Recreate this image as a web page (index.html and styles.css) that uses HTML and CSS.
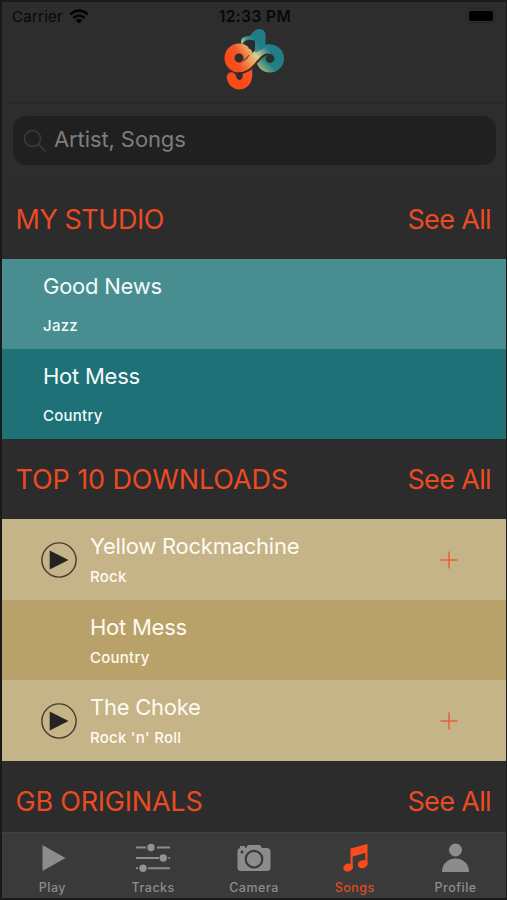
FILE: index.html
```html
<!DOCTYPE html>
<html lang="en">
<head>
<meta charset="utf-8">
<title>Songs</title>
<link rel="stylesheet" href="styles.css">
</head>
<body>
<div class="phone">
  <header class="top">
    <div class="status">
      <div class="carrier"><span>Carrier</span>
        <svg width="20" height="15" viewBox="0 0 20 15"><g fill="none" stroke="#030303" stroke-width="2.5"><path d="M1.2 5.5Q10-2.2 18.8 5.5"/><path d="M4.5 9Q10 4.1 15.5 9"/></g><path d="M6.8 11.2Q10 8.5 13.2 11.2L10 14.5z" fill="#030303"/></svg>
      </div>
      <div class="time">12:33 PM</div>
      <svg class="battery" width="32" height="16" viewBox="0 0 32 16"><rect x=".7" y=".7" width="28" height="14" rx="4" fill="none" stroke="#262626"/><rect x="3" y="3" width="24" height="10" rx="2" fill="#000"/><path d="M30 5.5q2 2.2 0 4.5z" fill="#222"/></svg>
    </div>
    <svg class="logo" width="62" height="64" viewBox="0 0 62 64">
      <defs>
        <linearGradient id="warm" gradientUnits="userSpaceOnUse" x1="8" y1="36" x2="34" y2="20"><stop offset="0" stop-color="#f94b18"/><stop offset=".38" stop-color="#f4582b"/><stop offset=".7" stop-color="#e9a35f"/><stop offset="1" stop-color="#e5cf95"/></linearGradient>
        <linearGradient id="tail" gradientUnits="userSpaceOnUse" x1="20" y1="50" x2="29" y2="36"><stop offset="0" stop-color="#f94b18"/><stop offset=".6" stop-color="#ef5a24"/><stop offset="1" stop-color="#6d3a20"/></linearGradient>
        <linearGradient id="band" gradientUnits="userSpaceOnUse" x1="17" y1="40" x2="41" y2="17"><stop offset="0" stop-color="#f65222"/><stop offset=".35" stop-color="#ed9d58"/><stop offset=".62" stop-color="#dccb92"/><stop offset="1" stop-color="#22818b"/></linearGradient>
        <linearGradient id="cool" gradientUnits="userSpaceOnUse" x1="34" y1="42" x2="46" y2="30"><stop offset="0" stop-color="#dcd592"/><stop offset=".4" stop-color="#6d9c7c"/><stop offset=".8" stop-color="#217e87"/></linearGradient>
        <linearGradient id="flag" gradientUnits="userSpaceOnUse" x1="17" y1="16" x2="29" y2="7"><stop offset="0" stop-color="#d4d5ab"/><stop offset=".6" stop-color="#378c91"/><stop offset="1" stop-color="#207c85"/></linearGradient>
      </defs>
      <path d="M23.500 38V46C23.500 58 9 59 7.500 48" fill="none" stroke="url(#tail)" stroke-width="9.500" stroke-linecap="round"/>
      <circle cx="15" cy="29" r="9.500" fill="none" stroke="url(#warm)" stroke-width="10"/>
      <circle cx="46" cy="29.500" r="9.200" fill="none" stroke="url(#cool)" stroke-width="9.600"/>
      <path d="M17 39C25 39 29 31 34 25Q39 19.500 46 20.300" fill="none" stroke="url(#band)" stroke-width="9.500"/>
      <path d="M18 16C15 9 20 7 26 7Q30 0 35.500 0C39.500 0 41.500 3 41.500 7V18L31 24V12C26 10 20 10 18 16z" fill="url(#flag)"/>
      <path d="M14 44.500C26 44 29 37 35 31Q39 26 44 25" fill="none" stroke="#352820" stroke-width="1.800"/>
      <path d="M17 32Q22 31 25 26" fill="none" stroke="#78462f" stroke-width="1.100"/>
      <path d="M24.500 19.500V16.500Q28 15 29 12H31V22Q28 19.500 24.500 19.500z" fill="#292c2c"/>
    </svg>
  </header>
  <div class="search-wrap"><div class="search">
    <svg width="24" height="24" viewBox="0 0 24 24"><g fill="none" stroke="#383838" stroke-width="1.8"><circle cx="9.5" cy="9.5" r="8"/><path d="M15.5 15.5L22.5 22.5"/></g></svg>
    <span>Artist, Songs</span>
  </div></div>

  <section class="head"><span class="studio">MY STUDIO</span><a>See All</a></section>
  <div class="tall light-teal"><b>Good News</b><small>Jazz</small></div>
  <div class="tall teal"><b>Hot Mess</b><small>Country</small></div>

  <section class="head"><span class="top10">TOP 10 DOWNLOADS</span><a>See All</a></section>
  <div class="row sand">
    <svg class="play" width="36" height="36" viewBox="0 0 36 36"><circle cx="18" cy="18" r="17.1" fill="none" stroke="#463c2d" stroke-width="1.4"/><path d="M8.7 8.5V27.5L27.5 18z" fill="#262422"/></svg>
    <div class="song"><b>Yellow Rockmachine</b><small>Rock</small></div>
    <svg class="plus" width="18" height="18" viewBox="0 0 18 18"><path d="M.5 9H17.5M9 .5V17.5" stroke="#e5623b" stroke-width="1.5"/></svg>
  </div>
  <div class="row gold">
    <div class="song solo"><b>Hot Mess</b><small>Country</small></div>
  </div>
  <div class="row sand">
    <svg class="play" width="36" height="36" viewBox="0 0 36 36"><circle cx="18" cy="18" r="17.1" fill="none" stroke="#463c2d" stroke-width="1.4"/><path d="M8.7 8.5V27.5L27.5 18z" fill="#262422"/></svg>
    <div class="song"><b>The Choke</b><small>Rock 'n' Roll</small></div>
    <svg class="plus" width="18" height="18" viewBox="0 0 18 18"><path d="M.5 9H17.5M9 .5V17.5" stroke="#e5623b" stroke-width="1.5"/></svg>
  </div>
  <section class="head last"><span class="gb">GB ORIGINALS</span><a>See All</a></section>

  <nav class="tabs">
    <div class="tab"><svg width="36" height="32" viewBox="0 0 36 32"><path d="M8.5 3V29L31.5 16z" fill="#8c8c8c"/></svg><span>Play</span></div>
    <div class="tab"><svg width="36" height="32" viewBox="0 0 36 32"><path d="M1 5.5H11M22 5.5H35M1 16H24M33.5 16H35M1 26.3H3M13 26.3H35" stroke="#8c8c8c" stroke-width="2"/><g fill="#929292"><circle cx="16" cy="5.5" r="3.7"/><circle cx="28.3" cy="16" r="3.7"/><circle cx="8" cy="26.3" r="3.7"/></g></svg><span>Tracks</span></div>
    <div class="tab"><svg width="36" height="32" viewBox="0 0 36 32"><path d="M5 6h5l2-3h12l2 3h5q3.5 0 3.5 3.5v16q0 3.5-3.5 3.5H5q-3.5 0-3.5-3.500v-16Q1.500 6 5 6z" fill="#8c8c8c"/><path d="M4 6V4H9V6z" fill="#8c8c8c"/><circle cx="18" cy="17.200" r="8.300" fill="none" stroke="#3a3a3a" stroke-width="2.200"/><circle cx="6" cy="10" r="1.500" fill="#3a3a3a"/></svg><span>Camera</span></div>
    <div class="tab active"><svg width="36" height="32" viewBox="0 0 36 32"><g fill="#fb4b1c"><path d="M13.500 6.500L30.500 2V22.500H28.300V11L15.700 14.500V26H13.500z"/><ellipse cx="11.200" cy="25.500" rx="5" ry="4" transform="rotate(-18 11.200 25.500)"/><ellipse cx="25.700" cy="22.200" rx="5" ry="4" transform="rotate(-18 25.700 22.200)"/></g></svg><span>Songs</span></div>
    <div class="tab"><svg width="36" height="32" viewBox="0 0 36 32"><g fill="#8c8c8c"><circle cx="17.500" cy="8" r="6.500"/><path d="M4 30C4 12 31 12 31 30z"/></g></svg><span>Profile</span></div>
  </nav>
</div>
</body>
</html>
```

FILE: styles.css
```css
* { box-sizing: border-box; }
body { margin: 0; background: #1b1a1a; font-family: Inter, "Liberation Sans", sans-serif; }
svg { display: block; flex: none; }
.phone { width: 507px; height: 900px; padding: 2px 1px 3px 2px; display: flex; flex-direction: column; overflow: hidden; }
.phone > * { flex: none; }
.top { height: 102px; background: #2d2d2d; border-bottom: 1px solid #282828; }
.status { height: 27px; display: grid; grid-template-columns: 1fr auto 1fr; align-items: center; padding: 1px 8px 0 10px; color: #080808; font-size: 15px; }
.carrier { display: flex; gap: 6px; align-items: center; letter-spacing: .25px; }
.time { font-size: 15.5px; font-weight: 600; letter-spacing: .4px; }
.battery { justify-self: end; }
.logo { margin: 0 auto; transform: translateX(1px); }
.search-wrap { height: 75px; background: #2d2d2d; padding: 12px 10px 0 11px; border-bottom: 1px solid #292929; }
.search { height: 49px; border-radius: 13px; background: #202020; display: flex; align-items: center; gap: 7px; padding-left: 10px; color: #7d7d7d; font-size: 22px; letter-spacing: -.1px; }
.search span { margin-top: -3px; }
.head { height: 80px; background: #2c2c2c; display: flex; align-items: center; justify-content: space-between; padding: 1px 15px 0 14px; color: #ea4b22; font-size: 27px; }
.head span { margin-left: -.5px; }
.studio { letter-spacing: -.45px; }
.top10 { letter-spacing: -.12px; }
.gb { letter-spacing: -.22px; }
.head a { letter-spacing: -.65px; }
.tall { height: 90px; padding: 13px 0 0 41px; display: flex; flex-direction: column; color: #f2fbfb; }
.light-teal { background: #488e90; }
.teal { background: #1e7176; }
b { font-size: 22px; font-weight: 400; line-height: 28px; letter-spacing: -.25px; }
small { font-size: 15px; font-weight: 500; line-height: 20px; letter-spacing: .25px; }
.tall small { margin-top: 16px; }
.row { height: 81px; display: flex; align-items: center; padding: 0 48px 0 39px; color: #fffaf0; }
.sand { background: #c5b488; }
.gold { background: #b8a26a; height: 80px; }
.song { display: flex; flex-direction: column; margin: -1px 0 0 13px; flex: 1; gap: 7px; }
.solo { margin-left: 49px; margin-top: 0; }
.last { height: 71px; padding-bottom: 0; align-items: flex-start; padding-top: 24px; }
.tabs { height: 66px; background: #3a3a3a; border-top: 1px solid #414141; display: grid; grid-template-columns: repeat(5, 1fr); color: #8c8c8c; }
.tab { display: flex; flex-direction: column; align-items: center; padding-top: 9px; font-size: 12.5px; font-weight: 500; letter-spacing: .5px; }
.tab span { margin-top: 6px; line-height: 16px; }
.active { color: #df4b25; }
```
